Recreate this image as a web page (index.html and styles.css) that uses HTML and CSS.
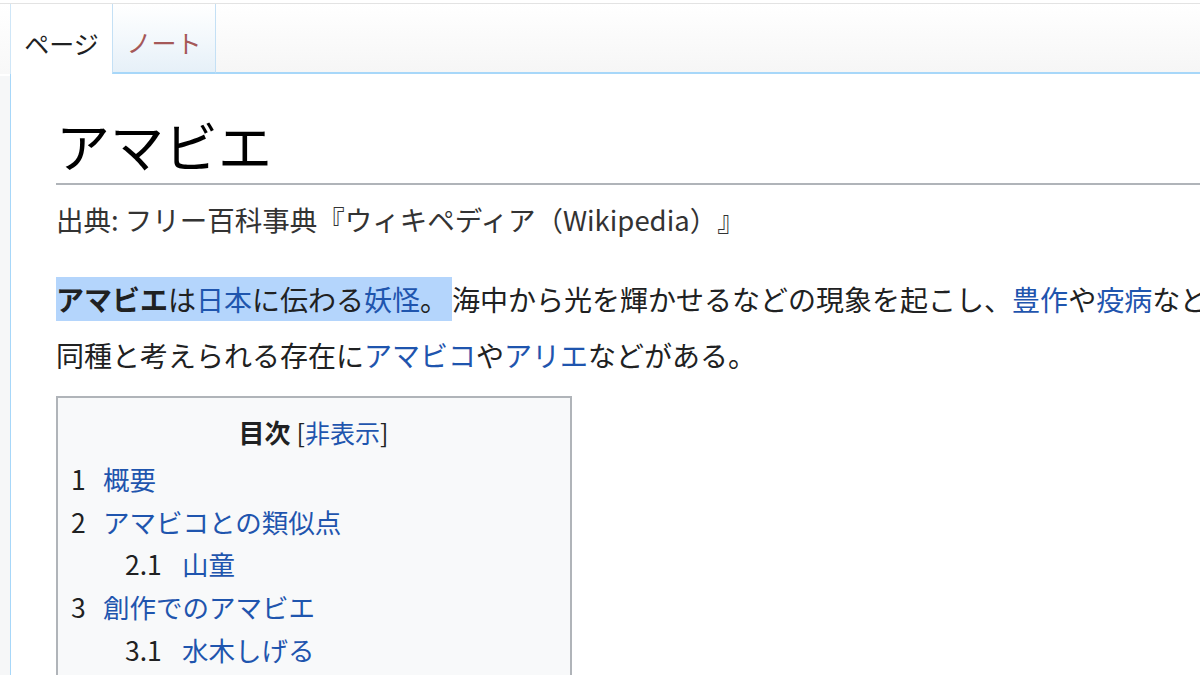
FILE: index.html
```html
<!DOCTYPE html>
<html lang="ja">
<head>
<meta charset="utf-8">
<title>アマビエ - Wikipedia</title>
<link rel="stylesheet" href="styles.css">
</head>
<body>
<div class="page">
  <div class="header">
    <div class="tab tab-selected">ページ</div>
    <div class="tab tab-talk">ノート</div>
    <div class="tab-fill"></div>
  </div>
  <div class="content">
    <h1 class="title">アマビエ</h1>
    <div class="site-sub">出典: フリー百科事典『ウィキペディア（Wikipedia）』</div>
    <p class="lead"><span class="sel"><b>アマビエ</b>は<a href="#">日本</a>に伝わる<a href="#">妖怪</a>。</span>海中から光を輝かせるなどの現象を起こし、<a href="#">豊作</a>や<a href="#">疫病</a>などの予言をしたとされる。<br>同種と考えられる存在に<a href="#">アマビコ</a>や<a href="#">アリエ</a>などがある。</p>
    <div class="toc">
      <div class="toc-title"><b>目次</b> <span class="toc-toggle">[<a href="#">非表示</a>]</span></div>
      <ul class="toc-list">
        <li class="lv1"><span class="num">1</span><a href="#">概要</a></li>
        <li class="lv1"><span class="num">2</span><a href="#">アマビコとの類似点</a></li>
        <li class="lv2"><span class="num">2.1</span><a href="#">山童</a></li>
        <li class="lv1"><span class="num">3</span><a href="#">創作でのアマビエ</a></li>
        <li class="lv2"><span class="num">3.1</span><a href="#">水木しげる</a></li>
        <li class="lv2"><span class="num">3.2</span><a href="#">その他</a></li>
      </ul>
    </div>
  </div>
</div>
</body>
</html>
```
FILE: styles.css
```css
html, body {
  margin: 0;
  padding: 0;
}
body {
  background: #f6f6f6;
  overflow: hidden;
  width: 1200px;
  height: 675px;
  font-family: "Noto Sans CJK JP", "Noto Sans", sans-serif;
  color: #202122;
  text-spacing-trim: space-all;
}
.page {
  width: 1500px;
  padding-top: 3px;
  background: linear-gradient(#ffffff 0px, #ffffff 76px, #f6f7f8 76px);
}
.header {
  display: flex;
  height: 71px;
  border-top: 1px solid #e3e3e3;
  padding-left: 10px;
  box-sizing: border-box;
  background: linear-gradient(#ffffff, #f8f8f8);
}
.tab {
  box-sizing: border-box;
  height: 70px;
  font-size: 25px;
  line-height: 1;
  display: flex;
  align-items: center;
  justify-content: center;
  padding-top: 8px;
}
.tab-selected {
  width: 102px;
  background: #ffffff;
  border-left: 1px solid #cfe6f7;
  color: #202122;
}
.tab-talk {
  width: 104px;
  background: linear-gradient(#ffffff 0%, #f3f8fc 50%, #e6f0f8 100%);
  border-left: 1px solid #c4e0f5;
  border-right: 1px solid #c4e0f5;
  border-bottom: 2px solid #a7d7f9;
  color: #a55858;
}
.tab-fill {
  flex: 1;
  background: linear-gradient(#ffffff 0%, #f6f6f6 100%);
  border-bottom: 2px solid #a7d7f9;
}
.content {
  margin-left: 10px;
  border-left: 1px solid #a7d7f9;
  background: #ffffff;
  padding-left: 45px;
  padding-top: 1px;
  height: 700px;
}
.title {
  margin: 35px 0 0 0;
  font-size: 54px;
  font-weight: normal;
  line-height: 70px;
  color: #000000;
  padding-bottom: 3px;
  border-bottom: 2px solid #b0b4b9;
}
.site-sub {
  margin-top: 14px;
  font-size: 27.5px;
  line-height: 41px;
  color: #333333;
}
.lead {
  margin: 31px 0 0 0;
  font-size: 28px;
  line-height: 56px;
  white-space: nowrap;
}
a {
  color: #1f55ae;
  text-decoration: none;
}
.sel {
  background: #b4d5fc;
  padding: 2px 4px 2px 0;
}
.lead b {
  font-weight: bold;
}
.toc {
  margin-top: 13px;
  width: 516px;
  box-sizing: border-box;
  background: #f8f9fa;
  border: 2px solid #b0b4b9;
  padding: 14px 14px 10px 13px;
}
.toc-title {
  text-align: center;
  font-size: 26px;
  line-height: 40px;
}
.toc-title b {
  font-weight: bold;
}
.toc-toggle {
  font-size: 25px;
}
.toc-list {
  list-style: none;
  margin: 6px 0 0 0;
  padding: 0;
  font-size: 26.5px;
  line-height: 42.7px;
}
.toc-list li {
  display: flex;
}
.num {
  display: inline-block;
  color: #202122;
}
.lv1 .num {
  width: 32px;
}
.lv2 {
  padding-left: 54px;
}
.lv2 .num {
  width: 57px;
}
```
